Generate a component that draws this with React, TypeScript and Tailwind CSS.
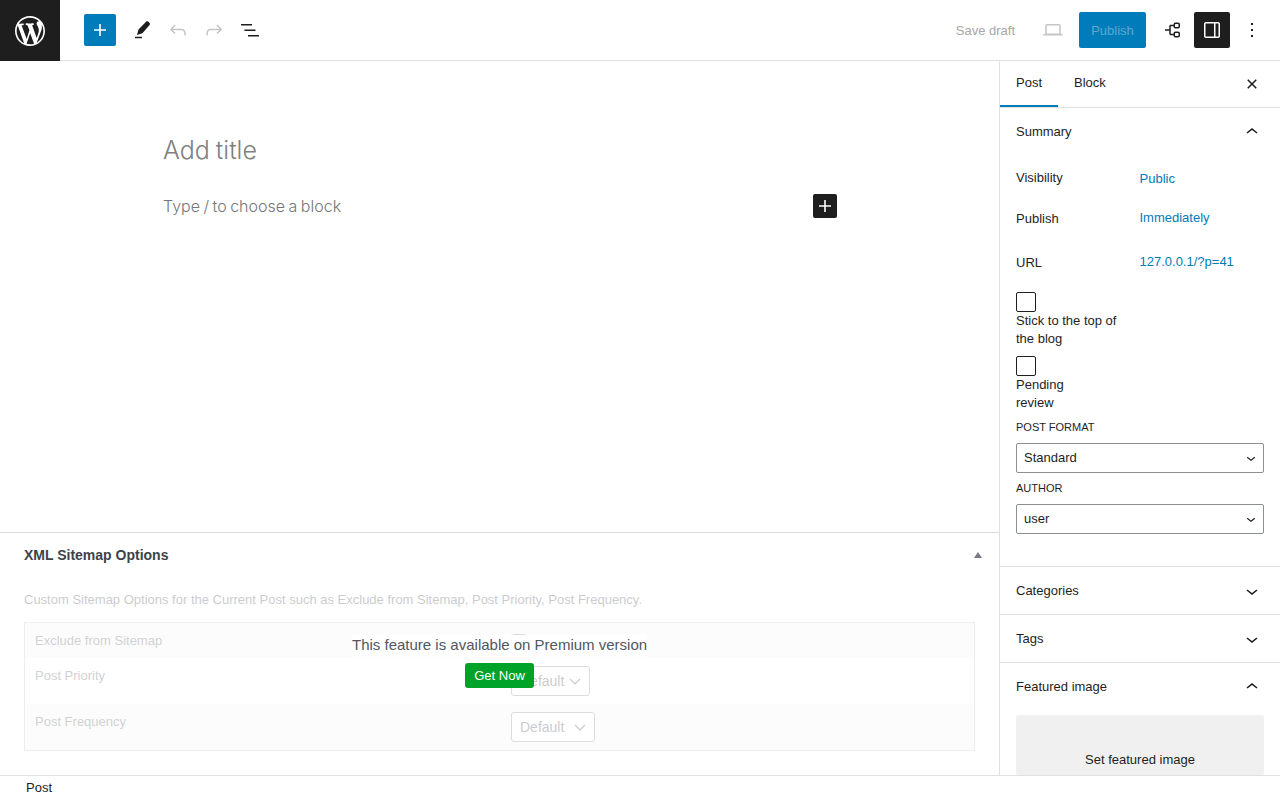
import type { ReactNode } from 'react';

const sans = 'font-["Liberation_Sans",Arial,sans-serif]';

function Icon({ d, size = 24, box = 24, className = '' }: { d: string; size?: number; box?: number; className?: string }) {
  return (
    <svg width={size} height={size} viewBox={`0 0 ${box} ${box}`} fill="currentColor" className={className}>
      <path d={d} />
    </svg>
  );
}

const icons = {
  plus: 'M18 11.2h-5.2V6h-1.6v5.2H6v1.6h5.2V18h1.6v-5.2H18z',
  edit: 'M19.6 6.900c.5-.6.5-1.400 0-1.900l-1.400-1.400c-.5-.5-1.300-.5-1.900 0L8.500 11.400 7 16.900l5.400-1.600zM5 20.200h7v-1.400H5z',
  undo: 'M18.3 11.7c-.6-.6-1.4-.9-2.3-.9H6.7l2.9-3.3-1.1-1-4.5 5L8.5 16l1-1-2.7-2.7H16c.5 0 .9.2 1.3.5 1 1 1 3.4 1 4.5v.3h1.5v-.2c0-1.5 0-4.3-1.5-5.7z',
  redo: 'M15.6 6.5l-1.1 1 2.9 3.3H8c-.9 0-1.7.3-2.3.9-1.4 1.5-1.4 4.2-1.4 5.6v.2h1.5v-.3c0-1.1 0-3.5 1-4.5.3-.3.7-.5 1.3-.5h9.2L14.5 15l1.1 1.1 4.6-4.6-4.6-5z',
  list: 'M3 6h11v1.5H3V6zm3.5 5.5h11V13h-11v-1.5zM21 17H10v1.5h11V17z',
  desktop: 'M20.5 16h-.7V8c0-1.1-.9-2-2-2H6.2c-1.1 0-2 .9-2 2v8h-.7c-.8 0-1.5.7-1.5 1.5h20c0-.8-.7-1.5-1.5-1.5zM5.7 8c0-.3.2-.5.5-.5h11.6c.3 0 .5.2.5.5v7.6H5.7V8z',
  sidebar: 'M18 4H6c-1.1 0-2 .9-2 2v12c0 1.1.9 2 2 2h12c1.1 0 2-.9 2-2V6c0-1.1-.9-2-2-2zM6 5.5h8v13H6c-.3 0-.5-.2-.5-.5V6c0-.3.2-.5.5-.5zm12.5 12.5c0 .3-.2.5-.5.5h-2.5v-13H18c.3 0 .5.2.5.5v12z',
  more: 'M13 19h-2v-2h2v2zm0-6h-2v-2h2v2zm0-6h-2V5h2v2z',
  close: 'M12 13.060l3.712 3.713 1.061-1.060L13.061 12l3.712-3.712-1.060-1.060L12 10.938 8.288 7.227l-1.061 1.060L10.939 12l-3.712 3.712 1.060 1.061L12 13.061z',
  up: 'M6.5 12.4L12 8l5.5 4.4-.9 1.2L12 10l-4.5 3.6-1-1.2z',
  down: 'M17.5 11.6L12 16l-5.5-4.4.9-1.2L12 14l4.5-3.6 1 1.2z',
  wp: 'M20 10c0-5.51-4.49-10-10-10C4.48 0 0 4.49 0 10c0 5.52 4.48 10 10 10 5.51 0 10-4.48 10-10zM7.78 15.37L4.37 6.22c.55-.02 1.17-.08 1.17-.08.5-.06.44-1.13-.06-1.11 0 0-1.45.11-2.37.11-.18 0-.37 0-.58-.01C4.12 2.69 6.87 1.11 10 1.11c2.33 0 4.45.87 6.05 2.34-.68-.11-1.65.39-1.65 1.58 0 .74.45 1.36.9 2.1.35.61.55 1.36.55 2.46 0 1.49-1.4 5-1.4 5l-3.03-8.37c.54-.02.82-.17.82-.17.5-.05.44-1.25-.06-1.22 0 0-1.44.12-2.38.12-.87 0-2.33-.12-2.33-.12-.5-.03-.56 1.2-.06 1.22l.92.08 1.26 3.41zM17.41 10c.24-.64.74-1.87.43-4.25.7 1.29 1.05 2.71 1.05 4.25 0 3.29-1.73 6.24-4.4 7.78.97-2.59 1.94-5.2 2.92-7.78zM6.1 18.09C3.12 16.65 1.11 13.53 1.11 10c0-1.3.23-2.48.72-3.59C3.25 10.3 4.67 14.2 6.1 18.09zm4.03-6.63l2.58 6.98c-.86.29-1.76.45-2.71.45-.79 0-1.57-.11-2.29-.33.81-2.38 1.62-4.74 2.42-7.1z',
};

function SidebarSection({ title, open, children }: { title: string; open?: boolean; children?: ReactNode }) {
  return (
    <div className="border-b border-[#e0e0e0] last:border-b-0">
      <div className="h-[47px] pl-4 pr-4 flex items-center justify-between text-[13px] text-[#1e1e1e]">
        <span>{title}</span>
        <Icon d={open ? icons.up : icons.down} className="shrink-0" />
      </div>
      {children}
    </div>
  );
}

function SummaryRow({ label, value, valueClass, rowClass }: { label: string; value: string; valueClass: string; rowClass: string }) {
  return (
    <div className={`grid grid-cols-[123.5px_1fr] items-start leading-[18px] ${rowClass}`}>
      <span>{label}</span>
      <span className={`text-[#007cba] ${valueClass}`}>{value}</span>
    </div>
  );
}

function PanelSelect({ value }: { value: string }) {
  return (
    <div className="h-[30px] border border-[#8c8f94] rounded-[2px] pl-[7px] pr-[3px] flex items-center justify-between text-[13px] text-[#1e1e1e]">
      <span>{value}</span>
      <Icon d={icons.down} size={18} />
    </div>
  );
}

function MetaSelect({ className }: { className: string }) {
  return (
    <div className={`h-[30px] border border-[#8c8f94] rounded-[3px] pl-2 flex items-center justify-between text-[14px] text-[#50575e] bg-white ${className}`}>
      <span>Default</span>
      <svg width="12" height="12" viewBox="0 0 12 12" fill="none" stroke="currentColor" strokeWidth="1.2" className="mr-2"><path d="M1 4l5 5 5-5" /></svg>
    </div>
  );
}

export default function App() {
  return (
    <div className={`h-[800px] w-[1280px] overflow-hidden bg-white flex flex-col ${sans}`}>
      <header className="h-[61px] shrink-0 border-b border-[#e0e0e0] flex items-center">
        <div className="w-[60px] h-[61px] -mb-px bg-[#1e1e1e] flex items-center justify-center text-white">
          <Icon d={icons.wp} box={20} size={30} />
        </div>
        <div className="ml-6 w-8 h-8 rounded-[2px] bg-[#007cba] text-white flex items-center justify-center">
          <Icon d={icons.plus} />
        </div>
        <div className="ml-[14px] flex items-center gap-3 text-[#1e1e1e]">
          <Icon d={icons.edit} />
          <Icon d={icons.undo} className="text-[#c5c5c5]" />
          <Icon d={icons.redo} className="text-[#c5c5c5]" />
          <Icon d={icons.list} />
        </div>
        <div className="ml-auto flex items-center">
          <span className="text-[13px] text-[#a7a7a7] mr-[26px] pt-[2px]">Save draft</span>
          <Icon d={icons.desktop} className="text-[#c5c5c5] mr-[14px]" />
          <div className="w-[67px] h-9 pt-[2px] rounded-[2px] bg-[#007cba] text-[13px] text-[#5fa9d0] flex items-center justify-center">Publish</div>
          <svg width="24" height="24" viewBox="0 0 24 24" fill="none" stroke="#1e1e1e" strokeWidth="1.5" className="ml-[14px]">
            <path d="M5 12h5M10 7.500v9M10 7.500h4M10 16.500h4" />
            <rect x="14.250" y="5.250" width="5" height="4.500" rx="1.200" />
            <rect x="14.250" y="14.250" width="5" height="4.500" rx="1.200" />
          </svg>
          <div className="ml-[10px] w-9 h-9 rounded-[2px] bg-[#1e1e1e] text-white flex items-center justify-center">
            <Icon d={icons.sidebar} />
          </div>
          <Icon d={icons.more} className="ml-[10px] mr-4 text-[#1e1e1e]" />
        </div>
      </header>

      <div className="flex-1 min-h-0 flex">
        <main className="w-[999px] flex flex-col">
          <div className="flex-1 pl-[163px]">
            <div className="mt-[71px] text-[25px] leading-9 font-['Inter',sans-serif] font-light text-[#808080] [word-spacing:-1px]">Add title</div>
            <div className="mt-[26px] w-[674px] h-6 flex items-center justify-between font-['Inter',sans-serif] text-[16px] font-light text-[#757575] [word-spacing:-1px]">
              <span>Type / to choose a block</span>
              <div className="w-6 h-6 rounded-[2px] bg-[#1e1e1e] text-white flex items-center justify-center">
                <Icon d={icons.plus} />
              </div>
            </div>
          </div>

          <section className="relative h-[243px] border-t border-[#dcdcde] px-6">
            <div className="h-[44px] flex items-center justify-between">
              <h2 className="text-[14px] font-bold text-[#3c434a]">XML Sitemap Options</h2>
              <div className="w-0 h-0 mr-[-7px] border-x-[4px] border-x-transparent border-b-[6px] border-b-[#787c82]" />
            </div>
            <div className="opacity-30">
              <p className="mt-[13px] text-[13px] leading-5 text-[#50575e]">Custom Sitemap Options for the Current Post such as Exclude from Sitemap, Post Priority, Post Frequency.</p>
              <div className="mt-[12px] border border-[#c3c4c7] text-[13px] text-[#646970] bg-[#f6f7f7]">
                <div className="h-[35px] pl-[10px] pt-[8px] relative">
                  Exclude from Sitemap
                  <div className="absolute left-[486px] top-[11px] w-4 h-4 border border-[#8c8f94] rounded-[3px] bg-white" />
                </div>
                <div className="h-[46px] pl-[10px] pt-[8px] bg-white grid grid-cols-[476px_1fr]">
                  <span>Post Priority</span>
                  <MetaSelect className="w-[79px]" />
                </div>
                <div className="h-[46px] pl-[10px] pt-[8px] grid grid-cols-[476px_1fr]">
                  <span>Post Frequency</span>
                  <MetaSelect className="w-[84px]" />
                </div>
              </div>
            </div>
            <div className="absolute left-[352px] top-[102px] h-[22px] w-[295px] bg-white/90 text-[15px] leading-[19px] text-[#50575e] text-center whitespace-nowrap">This feature is available on Premium version</div>
            <div className="absolute left-[465px] top-[130px] w-[69px] h-[25px] rounded-[3px] bg-[#00a32a] text-white text-[13px] flex items-center justify-center">Get Now</div>
          </section>
        </main>

        <aside className="w-[281px] border-l border-[#e0e0e0] overflow-hidden">
          <div className="h-[47px] border-b border-[#e0e0e0] flex items-start text-[13px] text-[#1e1e1e]">
            <div className="h-[46px] w-[58px] pl-4 pt-[12px] border-b-[2px] border-[#007cba]">Post</div>
            <div className="h-[46px] ml-4 pt-[12px]">Block</div>
            <Icon d={icons.close} className="ml-auto mr-4 mt-[11px]" />
          </div>

          <div className="border-b border-[#e0e0e0] h-[459px]">
            <div className="h-[47px] px-4 flex items-center justify-between text-[13px] text-[#1e1e1e]">
              <span>Summary</span>
              <Icon d={icons.up} />
            </div>
            <div className="px-4 text-[13px] text-[#1e1e1e]">
              <SummaryRow label="Visibility" value="Public" rowClass="h-[49px] pt-[14px]" valueClass="mt-[1px]" />
              <SummaryRow label="Publish" value="Immediately" rowClass="h-[43px] pt-[6px]" valueClass="-mt-[1px]" />
              <SummaryRow label="URL" value="127.0.0.1/?p=41" rowClass="h-[45px] pt-[7px]" valueClass="-mt-[1px]" />
              <div className="w-5 h-5 border border-[#1e1e1e] rounded-[2px]" />
              <div className="w-[110px] leading-[18px]">Stick to the top of the blog</div>
              <div className="w-5 h-5 border border-[#1e1e1e] rounded-[2px] mt-[8px]" />
              <div className="w-[60px] leading-[18px]">Pending review</div>
              <div className="mt-[7px] h-4 text-[11px] leading-4 uppercase">Post format</div>
              <div className="mt-[8px]"><PanelSelect value="Standard" /></div>
              <div className="mt-[7px] h-4 text-[11px] leading-4 uppercase">Author</div>
              <div className="mt-[8px]"><PanelSelect value="user" /></div>
            </div>
          </div>

          <SidebarSection title="Categories" />
          <SidebarSection title="Tags" />
          <SidebarSection title="Featured image" open>
            <div className="mx-4 h-[60px] mt-[5px] bg-[#f0f0f0] rounded-[2px] text-[13px] text-[#1e1e1e] text-center pt-[35px]">Set featured image</div>
          </SidebarSection>
        </aside>
      </div>

      <footer className="h-[25px] shrink-0 border-t border-[#e0e0e0] pl-[26px] text-[13px] leading-[23px] text-[#1e1e1e] bg-white z-10">Post</footer>
    </div>
  );
}
